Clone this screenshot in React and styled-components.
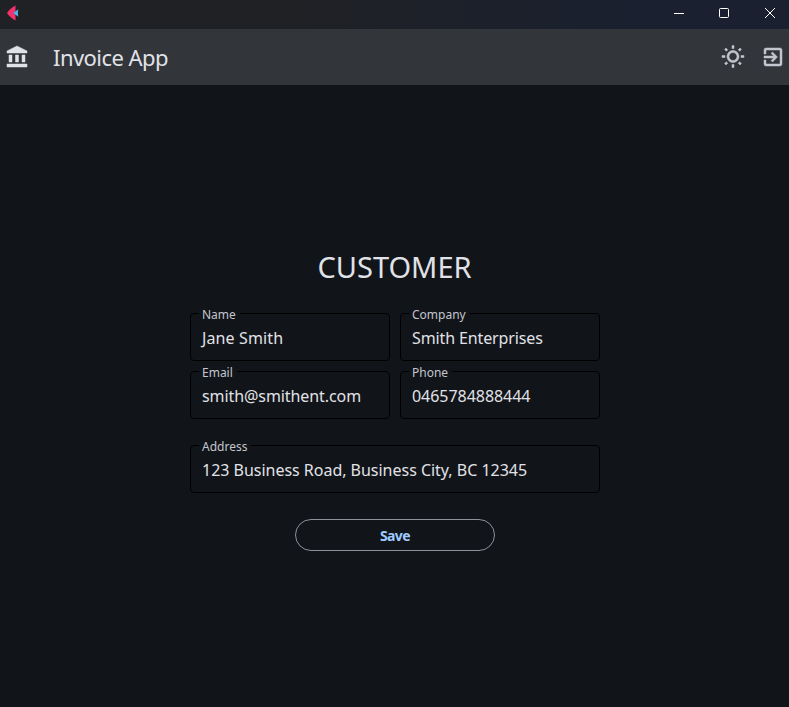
import React from "react";
import styled, { createGlobalStyle } from "styled-components";
import { MdAccountBalance, MdOutlineWbSunny, MdExitToApp } from "react-icons/md";

const GlobalStyle = createGlobalStyle`
  * { box-sizing: border-box; }
  body {
    margin: 0;
    background: #111418;
    font-family: "Noto Sans", "Open Sans", sans-serif;
    color: #e1e2e8;
  }
`;

const Window = styled.div`
  height: 707px;
  display: flex;
  flex-direction: column;
  overflow: hidden;
`;

const TitleBar = styled.header`
  height: 29px;
  flex: none;
  display: flex;
  justify-content: space-between;
  background: linear-gradient(90deg, #202124 0%, #202124 35%, #1a202e 75%, #1a2030 100%);
`;

const Logo = styled.svg`
  width: 13px;
  height: 16px;
  margin: 5px 0 0 7px;
`;

const Controls = styled.div`
  display: flex;
`;

const Control = styled.button`
  width: ${(p) => p.$width || 46}px;
  height: 26px;
  padding: 0 0 0 ${(p) => p.$inset || 0}px;
  border: 0;
  background: none;
  display: flex;
  align-items: center;
  justify-content: center;
`;

const AppBar = styled.nav`
  height: 56px;
  flex: none;
  display: flex;
  align-items: center;
  padding: 0 4px 0 5px;
  background: #323539;
`;

const AppTitle = styled.h1`
  margin: 0 auto 0 24px;
  font-size: 22px;
  line-height: 28px;
  font-weight: 400;
  letter-spacing: -0.55px;
`;

const BarIcon = styled.span`
  display: flex;
  font-size: 24px;
  color: ${(p) => p.$color};
  margin-left: ${(p) => p.$gap || 0}px;

  path:not([fill="none"]) {
    stroke: currentColor;
    stroke-width: 0.5px;
  }
`;

const Content = styled.main`
  flex: 1;
  display: flex;
  flex-direction: column;
  align-items: center;
  padding-top: 162px;
`;

const Heading = styled.h2`
  margin: 0;
  height: 66px;
  font-size: 29px;
  line-height: 40px;
  font-weight: 400;
`;

const Form = styled.form`
  width: 410px;
  margin-left: 1px;
  display: grid;
  grid-template-columns: 200px 200px;
  column-gap: 10px;
  row-gap: 10px;
  justify-items: center;
`;

const Field = styled.fieldset`
  width: 100%;
  height: 55px;
  min-width: 0;
  margin: ${(p) => (p.$wide ? 9 : -7)}px 0 0;
  grid-column: ${(p) => (p.$wide ? "1 / -1" : "auto")};
  padding: 0 11px;
  border: 1px solid #000;
  border-radius: 4px;
`;

const Legend = styled.legend`
  height: 15px;
  margin-left: -3px;
  padding: 0 4px 0 3px;
  font-size: 12px;
  line-height: 18px;
  color: #c3c6cf;
`;

const Value = styled.div`
  margin-top: 5px;
  font-size: 16px;
  line-height: 24px;
  white-space: nowrap;
  letter-spacing: ${(p) => p.$tracking}px;
`;

const SaveButton = styled.button`
  grid-column: 1 / -1;
  width: 200px;
  height: 32px;
  margin-top: 16px;
  padding: 2px 0 0;
  border: 1px solid #8d9199;
  border-radius: 16px;
  background: none;
  color: #9ecaff;
  font: 700 14px/20px "Noto Sans", sans-serif;
  letter-spacing: -0.6px;
`;

const fields = [
  { label: "Name", value: "Jane Smith", tracking: 0.12 },
  { label: "Company", value: "Smith Enterprises", tracking: -0.12 },
  { label: "Email", value: "smith@smithent.com", tracking: -0.08 },
  { label: "Phone", value: "0465784888444", tracking: -0.04 },
  { label: "Address", value: "123 Business Road, Business City, BC 12345", tracking: -0.02, wide: true },
];

export default function App() {
  return (
    <Window>
      <GlobalStyle />
      <TitleBar>
        <Logo viewBox="0 0 13 16">
          <path d="M8.5 0.5V6L6.5 8L8.5 10V15.5C5 14 2 11 0 8C2 5 5 2 8.5 0.5Z" fill="#f4316b" />
          <path d="M6 8L11.4 4.2C10.8 6.6 10.8 9.4 11.4 11.8Z" fill="#4fb4e8" />
        </Logo>
        <Controls>
          <Control aria-label="Minimize">
            <svg width="10" height="10"><path d="M0 5.5H10" stroke="#fff" /></svg>
          </Control>
          <Control aria-label="Maximize" $width={44}>
            <svg width="10" height="10"><rect x=".5" y=".5" width="9" height="9" rx="1" fill="none" stroke="#fff" /></svg>
          </Control>
          <Control aria-label="Close" $width={43} $inset={5}>
            <svg width="10" height="10"><path d="M0 0L10 10M10 0L0 10" stroke="#fff" /></svg>
          </Control>
        </Controls>
      </TitleBar>
      <AppBar>
        <BarIcon $color="#e1e2e8"><MdAccountBalance /></BarIcon>
        <AppTitle>Invoice App</AppTitle>
        <BarIcon $color="#c3c6cf"><MdOutlineWbSunny /></BarIcon>
        <BarIcon $color="#c3c6cf" $gap={16}><MdExitToApp /></BarIcon>
      </AppBar>
      <Content>
        <Heading>CUSTOMER</Heading>
        <Form>
          {fields.map((f) => (
            <Field key={f.label} $wide={f.wide}>
              <Legend>{f.label}</Legend>
              <Value $tracking={f.tracking}>{f.value}</Value>
            </Field>
          ))}
          <SaveButton type="button">Save</SaveButton>
        </Form>
      </Content>
    </Window>
  );
}
